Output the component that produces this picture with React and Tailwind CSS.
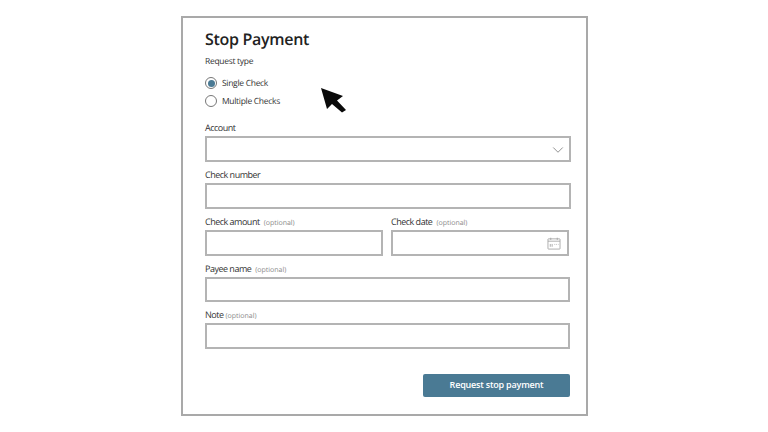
import { ChevronDown } from 'lucide-react'

const Optional = ({ className = 'ml-1' }) => (
  <span className={`text-[7px] tracking-normal text-[#8a8a8a] ${className}`}>(optional)</span>
)

const Field = ({ label, optional, className = '', boxClass = 'h-[26px]', children, tight }) => (
  <div className={className}>
    <div className="h-4 text-[9px] tracking-[-0.5px] text-[#333] leading-4">
      {label}
      {optional && <Optional className={tight ? 'ml-[2px]' : 'ml-[4px]'} />}
    </div>
    <div className={`${boxClass} border-2 border-[#b4b4b4] bg-white flex items-center justify-end`}>
      {children}
    </div>
  </div>
)

const Radio = ({ label, checked }) => (
  <div className="flex items-center h-[18px]">
    <span className="w-3 h-3 rounded-full border border-[#777] flex items-center justify-center bg-white">
      {checked && <span className="w-[7px] h-[7px] rounded-full bg-[#4a7a94]" />}
    </span>
    <span className="ml-[5px] mt-[2px] text-[8.5px] tracking-[-0.3px] text-[#333]">{label}</span>
  </div>
)

const CalendarIcon = () => (
  <svg width="14" height="13" viewBox="0 0 15 14" fill="none" stroke="#a0a0a0" strokeWidth="0.9" className="mr-[6px]">
    <rect x="1" y="2" width="13" height="11" rx="0.5" />
    <path d="M1 4.5h13M4 0.8v2.4M11 0.8v2.4" />
    <path d="M3.5 7.5v3M5.5 7.5v3M8 8h0.8M10 8h0.8M12 8h0.5" />
  </svg>
)

export default function App() {
  return (
    <div className="w-[768px] h-[432px] bg-white overflow-hidden pt-4 pl-[181px] font-['Open_Sans',sans-serif] [text-rendering:geometricPrecision]">
      <div className="relative w-[407px] h-[400px] border-2 border-[#a9a9a9] pl-[22px] pr-[15px]">
        <h1 className="mt-[9px] h-[23px] flex items-center text-[16px] font-semibold tracking-[-0.3px] text-[#222] leading-none">Stop Payment</h1>
        <div className="mt-[4px] h-4 flex items-center text-[8.5px] tracking-[-0.3px] text-[#333]">Request type</div>
        <div className="mt-[4px] flex flex-col">
          <Radio label="Single Check" checked />
          <Radio label="Multiple Checks" />
        </div>

        <div className="mt-[10px] flex flex-col gap-[5px]">
          <Field label="Account">
            <ChevronDown size={18} color="#8f8f8f" strokeWidth={1.3} className="mr-[2px] mt-[1px]" />
          </Field>
          <Field label="Check number" />
          <div className="flex gap-2 pr-px">
            <Field label="Check amount" optional className="w-[178px]" />
            <Field label="Check date" optional className="w-[178px]">
              <CalendarIcon />
            </Field>
          </div>
          <Field label="Payee name" optional className="mr-px" boxClass="h-[25px]" />
          <Field label="Note" optional tight className="mr-px" />
        </div>

        <div className="mt-[25px] mr-px flex justify-end">
          <button className="w-[147px] h-[23px] pb-[2px] rounded-[2px] bg-[#4a7a94] text-white text-[9px] tracking-[-0.2px] font-semibold">
            Request stop payment
          </button>
        </div>

        <svg width="28" height="26" viewBox="0 0 28 26" className="absolute left-[138px] top-[70px]">
          <path d="M0 0 L22 8 L16 12.5 L25 22 L21 24.5 L11 16 L6 21 Z" fill="#0a0a0a" />
        </svg>
      </div>
    </div>
  )
}
